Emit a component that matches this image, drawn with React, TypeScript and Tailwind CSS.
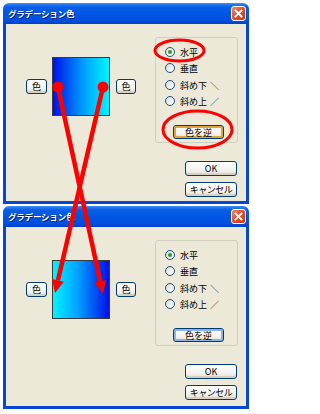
import React from "react";

const font = "font-['Noto_Sans_CJK_JP','Noto_Sans_CJK_SC',sans-serif]";

function XPButton({
  label,
  className,
  variant = "normal",
}: {
  label: string;
  className: string;
  variant?: "normal" | "hot" | "focus";
}) {
  const inner =
    variant === "hot"
      ? "shadow-[inset_0_0_0_2px_#E5A33C]"
      : variant === "focus"
      ? "shadow-[inset_0_0_0_2px_#8DB2E3]"
      : "shadow-[inset_0_-2px_0_#D6D0C5]";
  return (
    <div
      className={`flex items-center justify-center rounded-[3px] border border-[#003C74] bg-[linear-gradient(to_bottom,#FFFFFF_0%,#F4F3EE_60%,#E3E1D7_100%)] text-[9px] leading-none text-black ${inner} ${className}`}
    >
      {label}
    </div>
  );
}

function Radio({
  label,
  mark,
  checked,
  className = "",
}: {
  label: string;
  mark?: string;
  checked?: boolean;
  className?: string;
}) {
  return (
    <div className={`flex h-[16px] items-center pl-[9px] ${className}`}>
      <div className="flex h-[10px] w-[10px] items-center justify-center rounded-full border border-[#1C5180] bg-[linear-gradient(135deg,#DCDCD5_0%,#FFFFFF_100%)]">
        {checked && <div className="h-[4px] w-[4px] rounded-full bg-[#21A121]" />}
      </div>
      <span className="ml-[5px] text-[9px] leading-none text-black">{label}</span>
      {mark && <span className="ml-[3px] text-[9px] leading-none text-[#222222]">{mark}</span>}
    </div>
  );
}

function Dialog({ reversed, bodyH }: { reversed?: boolean; bodyH: string }) {
  const grad = reversed
    ? "bg-[linear-gradient(to_right,#00F4FF_0%,#00A0FF_45%,#0010E8_100%)]"
    : "bg-[linear-gradient(to_right,#0010E8_0%,#00A0FF_55%,#00F4FF_100%)]";
  return (
    <div className="w-[246px]">
      <div className="flex h-[21px] items-center justify-between rounded-t-[6px] bg-[linear-gradient(to_bottom,#3C8EF8_0%,#0A5FE6_18%,#0055E4_50%,#0150E0_82%,#0040C8_100%)] pl-[5px] pr-[3px]">
        <span className="text-[8.5px] font-bold leading-none tracking-[-0.2px] text-white [text-shadow:1px_1px_0_#0A1E6A]">
          グラデーション色
        </span>
        <div className="flex h-[15px] w-[15px] items-center justify-center rounded-[3px] border border-white bg-[linear-gradient(135deg,#F08A6A_0%,#E0502B_50%,#C23C18_100%)]">
          <svg width="9" height="9" viewBox="0 0 9 9">
            <path d="M1.5 1.5 L7.5 7.5 M7.5 1.5 L1.5 7.5" stroke="white" strokeWidth="1.8" strokeLinecap="square" />
          </svg>
        </div>
      </div>
      <div className={`flex border-x-[3px] border-b-[3px] border-[#0847D6] bg-[#ECE9D8] pl-[20px] pr-[8px] pt-[13px] ${bodyH}`}>
        <div className="mt-[20px] flex h-[59px] items-center">
          <XPButton label="色" className="h-[15px] w-[21px]" />
          <div className={`ml-[5px] h-[59px] w-[58px] border border-[#3A3A3A] ${grad}`} />
          <XPButton label="色" className="ml-[6px] h-[15px] w-[20px]" />
        </div>
        <div className="ml-auto flex w-[83px] flex-col">
          <div className="h-[106px] rounded-[3px] border border-[#D0D0BF] pt-[6px]">
            <Radio label="水平" checked />
            <Radio label="垂直" />
            <Radio label="斜め下" mark="＼" className="mt-[1px]" />
            <Radio label="斜め上" mark="／" />
            <XPButton
              label="色を逆"
              variant={reversed ? "focus" : "hot"}
              className="ml-[17px] mt-[16px] h-[14px] w-[51px]"
            />
          </div>
          <XPButton label="OK" className="ml-auto mr-[1px] mt-[18px] h-[15px] w-[52px]" />
          <XPButton label="キャンセル" className="ml-auto mr-[1px] mt-[6px] h-[15px] w-[52px] tracking-[-0.5px]" />
        </div>
      </div>
    </div>
  );
}

export default function App() {
  return (
    <div className={`relative h-[414px] w-[253px] overflow-hidden bg-white ${font}`}>
      <div className="flex flex-col gap-[2px] pl-[3px] pt-[3px]">
        <Dialog bodyH="h-[180px]" />
        <Dialog reversed bodyH="h-[182px]" />
      </div>
      <svg className="pointer-events-none absolute left-0 top-0" width="253" height="414" viewBox="0 0 253 414">
        <ellipse cx="179.5" cy="50.5" rx="24.5" ry="10.5" fill="none" stroke="#FF0000" strokeWidth="3" />
        <ellipse cx="197.5" cy="129.5" rx="34.5" ry="18.5" fill="none" stroke="#FF0000" strokeWidth="3" />
        <line x1="58" y1="87" x2="100.2" y2="281.3" stroke="#FF0000" strokeWidth="4.5" />
        <line x1="103" y1="87" x2="58" y2="280.3" stroke="#FF0000" strokeWidth="4.5" />
        <polygon points="103,294 106.1,280 94.4,282.6" fill="#FF0000" />
        <polygon points="55,293 63.8,281.7 52.1,278.9" fill="#FF0000" />
        <circle cx="58" cy="87" r="5.5" fill="#FF0000" />
        <circle cx="103" cy="87" r="5.5" fill="#FF0000" />
      </svg>
    </div>
  );
}
